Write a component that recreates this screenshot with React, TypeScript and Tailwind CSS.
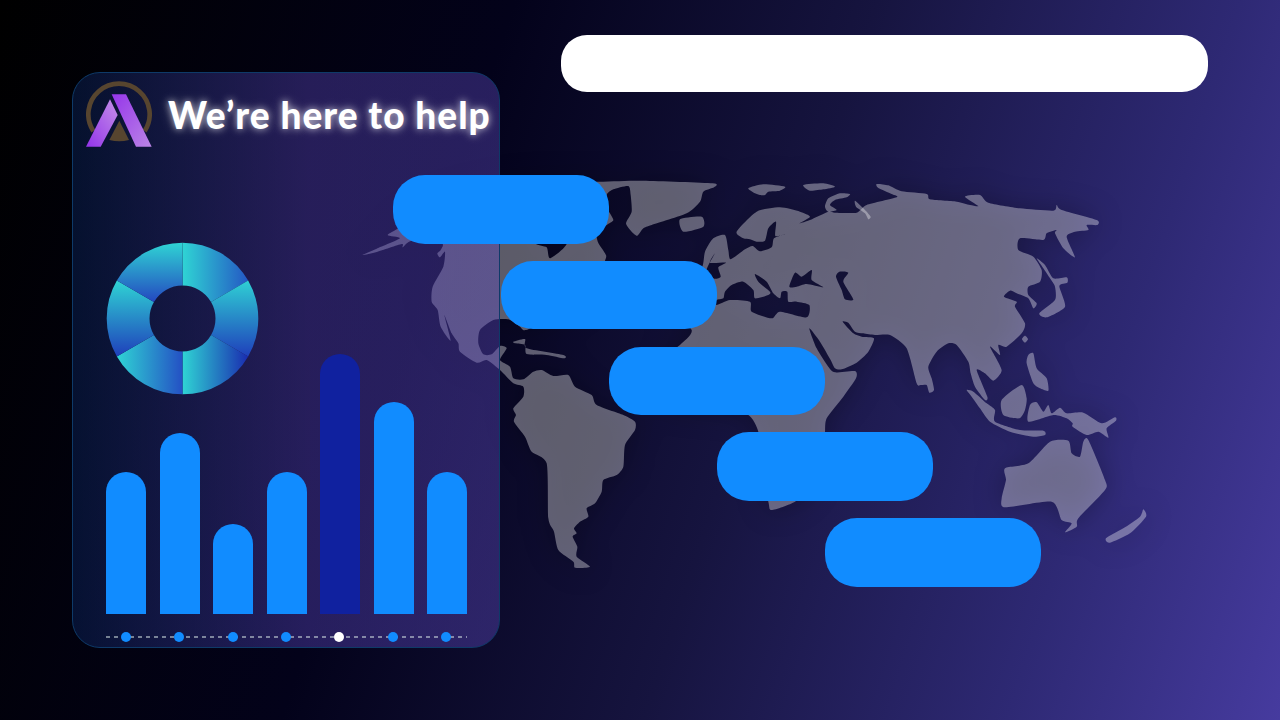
import { useMemo } from "react";

// Map outlines, traced in 3x crop coordinates (see the translate/scale on the <g>)
const LAND: string[] = [
  // Americas + Greenland
  "37,255 80,236 150,205 113,195 150,172 250,100 500,40 745,35 880,32 1088,40 1092,52 1060,65 1050,95 1010,130 905,165 880,175 862,197 845,185 828,160 845,125 842,75 835,48 790,58 770,75 775,120 790,150 770,165 740,190 745,219 765,250 765,272 700,400 535,478 510,470 475,448 430,450 390,480 385,520 400,553 425,553 450,528 470,535 450,570 480,590 490,625 520,628 550,605 575,600 610,618 655,615 675,650 725,675 740,705 820,735 855,755 855,780 825,825 820,890 800,915 760,930 755,965 735,1000 710,1015 715,1040 690,1055 672,1075 680,1090 668,1100 682,1130 680,1160 720,1190 675,1193 670,1175 625,1140 612,1085 595,1045 590,880 545,845 525,800 492,755 498,735 490,715 520,680 520,650 490,640 450,600 410,570 380,578 330,545 325,520 305,490 283,435 302,512 272,470 263,420 245,395 248,350 280,290 285,245 270,262 262,250 272,240 275,220 185,212 158,232 155,222 80,246",
  // Cuba
  "490,515 525,507 530,535 640,555 642,565 590,555 530,552 525,525 495,520",
  // Iceland
  "990,148 1055,140 1060,170 1000,185",
];

// Second crop starts 350px further right, so these get their own <g>
const LAND_EAST: string[] = [
  // Eurasia + Africa
  "0,300 15,245 40,205 75,195 85,240 92,268 135,238 158,228 180,244 215,232 222,205 255,192 226,198 228,155 205,175 195,212 170,215 150,208 130,205 110,185 170,125 240,112 300,125 330,140 298,160 330,150 385,125 405,128 470,128 500,105 590,82 575,72 535,54 530,42 565,46 605,64 680,72 690,88 770,95 810,105 835,108 795,80 840,75 865,98 960,115 1060,122 1070,105 1085,120 1190,150 1192,165 1160,165 1165,180 1125,185 1100,200 1125,262 1090,235 1065,190 1070,180 1040,190 1030,210 960,205 955,240 1000,260 1025,300 1020,335 985,350 985,375 1010,400 1000,415 985,385 950,370 930,362 912,380 950,395 945,410 975,460 965,490 920,530 895,525 900,555 870,530 905,600 880,632 855,610 830,600 862,680 855,690 825,650 812,610 805,575 770,525 745,520 710,545 685,590 695,625 702,660 688,668 680,645 662,645 650,640 620,535 570,495 525,495 490,490 465,485 445,458 428,455 460,490 485,500 522,505 505,545 470,578 425,598 405,595 392,570 360,515 328,475 350,535 385,590 405,607 465,603 468,625 430,680 380,745 375,790 370,860 330,950 285,995 215,1020 205,995 175,860 175,785 145,735 60,720 -100,700 -100,560 -60,525 -25,480 -100,400 -100,300",
  // Mediterranean
  "50,405 90,390 150,395 155,425 215,445 240,425 320,442 328,405 290,395 265,395 262,365 245,365 240,385 220,370 200,335 165,312 175,335 210,365 205,375 165,385 160,360 130,335 95,345 75,365 70,385 50,390",
  // Black Sea
  "268,350 285,308 305,320 335,300 335,330 370,352 320,342 290,350",
  // Caspian
  "408,320 418,305 445,308 430,335 460,388 435,388 425,360",
  // Channel
  "45,250 30,278 78,278 55,292 62,320 42,326 20,300",
];

const ISLANDS_EAST: string[] = [
  "145,55 190,43 255,50 240,62 205,65 195,75 180,75 165,70",
  "310,45 370,40 405,50 370,58 330,62",
  "375,110 385,85 420,70 450,72 440,82 405,90 390,105 410,120 385,125",
  "465,92 490,115 512,140 505,148 495,130 468,110",
  "1010,265 1035,285 1060,325 1100,322 1102,338 1078,348 1095,410 1040,442 1018,430 1065,390 1065,350 1050,325 1030,295",
  "975,497 984,507 975,518 966,507",
  "985,555 1000,550 1010,595 1040,625 1045,662 1020,655 1000,640 980,580",
  "800,660 820,665 860,700 885,720 885,755 960,780 1030,782 1035,795 1000,800 930,785 870,755 840,715 815,680",
  "905,690 965,645 980,685 975,720 958,745 910,735",
  "990,705 1010,697 1030,725 1045,705 1055,730 1080,713 1100,730 1150,728 1205,760 1245,742 1248,752 1220,775 1225,803 1195,785 1160,795 1118,770 1118,760 1100,745 1060,735 985,755",
  "915,895 985,880 1050,815 1105,812 1115,850 1140,860 1150,815 1165,810 1215,930 1215,960 1135,1045 1130,1070 1095,1087 1115,1060 1085,1050 1055,995 915,1012 905,985 918,930",
  "1218,1105 1270,1075 1320,1040 1330,1018 1338,1040 1290,1090 1230,1118",
];

// closed catmull-rom through the traced points
function outline(raw: string): string {
  const p = raw.split(" ").map((s) => s.split(",").map(Number));
  const n = p.length;
  let d = `M${p[0][0]} ${p[0][1]}`;
  for (let i = 0; i < n; i++) {
    const [a, b, c, e] = [p[(i - 1 + n) % n], p[i], p[(i + 1) % n], p[(i + 2) % n]];
    const k = 1 / 9;
    d += `C${b[0] + (c[0] - a[0]) * k} ${b[1] + (c[1] - a[1]) * k} ${c[0] - (e[0] - b[0]) * k} ${c[1] - (e[1] - b[1]) * k} ${c[0]} ${c[1]}`;
  }
  return d + "Z";
}

function WorldMap() {
  const west = useMemo(() => LAND.map(outline).join(""), []);
  const hudson = useMemo(
    () => outline("555,218 590,232 600,265 650,222 640,150 570,150"),
    [],
  );
  const east = useMemo(() => LAND_EAST.map(outline).join(""), []);
  const islands = useMemo(() => ISLANDS_EAST.map(outline).join(""), []);
  return (
    <svg
      viewBox="0 0 1280 720"
      className="absolute left-0 top-0 h-[720px] w-[1280px] [filter:drop-shadow(0_0_14px_rgba(0,0,0,0.8))]"
    >
      <g transform="translate(350 170) scale(0.33333)" fill="#ffffff" fillOpacity={0.35}>
        <path fillRule="evenodd" d={west + hudson} />
        <g transform="translate(1050 0)">
          <path fillRule="evenodd" d={east} />
          <path d={islands} />
        </g>
      </g>
    </svg>
  );
}

function Logo() {
  return (
    <svg viewBox="78 63 198 198" className="h-[66px] w-[66px] shrink-0">
      <defs>
        <linearGradient id="legL" x1="0" y1="1" x2="1" y2="0">
          <stop offset="0" stopColor="#9333ea" />
          <stop offset="1" stopColor="#c48fe8" />
        </linearGradient>
        <linearGradient id="legR" x1="0" y1="0" x2="1" y2="1">
          <stop offset="0" stopColor="#9535ea" />
          <stop offset="1" stopColor="#bb85e6" />
        </linearGradient>
      </defs>
      <path d="M100 213.4A92 92 0 1 1 254 213.4" fill="none" stroke="#57452f" strokeWidth="14" />
      <path d="M148 240L178 182L207 240Q178 248 148 240Z" fill="#57452f" />
      <path d="M78 260L150 118L173 165L122 260Z" fill="url(#legL)" />
      <path d="M155 103H198L275 260H228Z" fill="url(#legR)" />
    </svg>
  );
}

const SEGMENTS = [
  { id: "s1", a: 0, x1: 0, y1: 0, x2: 1, y2: 0, from: "#2fd4d4", to: "#2458c4" },
  { id: "s2", a: 60, x1: 0, y1: 0, x2: 0, y2: 1, from: "#2fd0d4", to: "#1f3fbb" },
  { id: "s3", a: 120, x1: 0, y1: 0, x2: 1, y2: 0, from: "#2fd4d4", to: "#1a2cb0" },
  { id: "s4", a: 180, x1: 0, y1: 0, x2: 1, y2: 0, from: "#2fd4d4", to: "#2450c4" },
  { id: "s5", a: 240, x1: 0, y1: 0, x2: 0, y2: 1, from: "#2fd4d4", to: "#1f3fbb" },
  { id: "s6", a: 300, x1: 0, y1: 0, x2: 0, y2: 1, from: "#2fd4d4", to: "#2448c0" },
];

function Donut() {
  const R = 75.8;
  const r = 33;
  const pt = (rad: number, deg: number) => {
    const t = (deg * Math.PI) / 180;
    return `${76.5 + rad * Math.sin(t)} ${76.5 - rad * Math.cos(t)}`;
  };
  return (
    <svg viewBox="0 0 153 153" className="h-[153px] w-[153px]">
      <defs>
        {SEGMENTS.map((s) => (
          <linearGradient key={s.id} id={s.id} x1={s.x1} y1={s.y1} x2={s.x2} y2={s.y2}>
            <stop offset="0" stopColor={s.from} />
            <stop offset="1" stopColor={s.to} />
          </linearGradient>
        ))}
      </defs>
      {SEGMENTS.map((s) => (
        <path
          key={s.id}
          fill={`url(#${s.id})`}
          d={`M${pt(r, s.a)}L${pt(R, s.a)}A${R} ${R} 0 0 1 ${pt(R, s.a + 60)}L${pt(r, s.a + 60)}A${r} ${r} 0 0 0 ${pt(r, s.a)}Z`}
        />
      ))}
    </svg>
  );
}

export default function App() {
  return (
    <div className="relative flex h-[720px] w-[1280px] items-start overflow-hidden bg-[linear-gradient(108deg,#000000_0%,#03021a_34%,#16143f_58%,#2e2974_82%,#463b9f_100%)] font-['Lato',sans-serif]">
      <WorldMap />

      {/* left card */}
      <div className="relative ml-[72px] mt-[72px] flex h-[576px] w-[428px] shrink-0 flex-col rounded-[28px] border border-[#0e3a68] bg-[linear-gradient(90deg,rgba(12,42,105,0.4),rgba(92,72,195,0.4)_55%,rgba(95,75,195,0.4))] px-[13px] pt-[8px]">
        <div className="flex items-center gap-[16px]">
          <Logo />
          <span className="whitespace-nowrap text-[37px] font-black leading-none tracking-[1px] text-white [text-shadow:0_0_7px_rgba(255,255,255,0.7),0_0_14px_rgba(255,255,255,0.25)]">
            We’re here to help
          </span>
        </div>
        <div className="ml-[20px] mt-[95px]">
          <Donut />
        </div>
        <div className="-mt-[41px] ml-[20px] flex h-[260px] w-[361px] items-end justify-between">
          <div className="h-[142px] w-10 rounded-t-[20px] bg-[#118cff]" />
          <div className="h-[181px] w-10 rounded-t-[20px] bg-[#118cff]" />
          <div className="h-[90px] w-10 rounded-t-[20px] bg-[#118cff]" />
          <div className="h-[142px] w-10 rounded-t-[20px] bg-[#118cff]" />
          <div className="h-[260px] w-10 rounded-t-[20px] bg-[#10219f]" />
          <div className="h-[212px] w-10 rounded-t-[20px] bg-[#118cff]" />
          <div className="h-[142px] w-10 rounded-t-[20px] bg-[#118cff]" />
        </div>
        <div className="relative ml-[20px] mt-[18px] flex h-[10px] w-[361px] items-center justify-between pl-[15px] pr-[16px]">
          <svg className="absolute left-0 top-[4px] h-[2px] w-[361px]" viewBox="0 0 361 2">
            <line x1="0" y1="1" x2="361" y2="1" stroke="#e2f2ee" strokeWidth="1" strokeDasharray="4 4" />
          </svg>
          <div className="relative size-[10px] rounded-full bg-[#118cff]" />
          <div className="relative size-[10px] rounded-full bg-[#118cff]" />
          <div className="relative size-[10px] rounded-full bg-[#118cff]" />
          <div className="relative size-[10px] rounded-full bg-[#118cff]" />
          <div className="relative size-[10px] rounded-full bg-white" />
          <div className="relative size-[10px] rounded-full bg-[#118cff]" />
          <div className="relative size-[10px] rounded-full bg-[#118cff]" />
        </div>
      </div>

      {/* search bar */}
      <div className="relative ml-[61px] mt-[35px] h-[57px] w-[647px] rounded-[26px] bg-white" />

      {/* staggered labels over the map */}
      <div className="absolute left-[393px] top-[175px] flex flex-col gap-[17.25px]">
        <div className="h-[68.5px] w-[216px] rounded-[32px] bg-[#118cff]" />
        <div className="ml-[108px] h-[68.5px] w-[216px] rounded-[32px] bg-[#118cff]" />
        <div className="ml-[216px] h-[68.5px] w-[216px] rounded-[32px] bg-[#118cff]" />
        <div className="ml-[324px] h-[68.5px] w-[216px] rounded-[32px] bg-[#118cff]" />
        <div className="ml-[432px] h-[68.5px] w-[216px] rounded-[32px] bg-[#118cff]" />
      </div>
    </div>
  );
}
